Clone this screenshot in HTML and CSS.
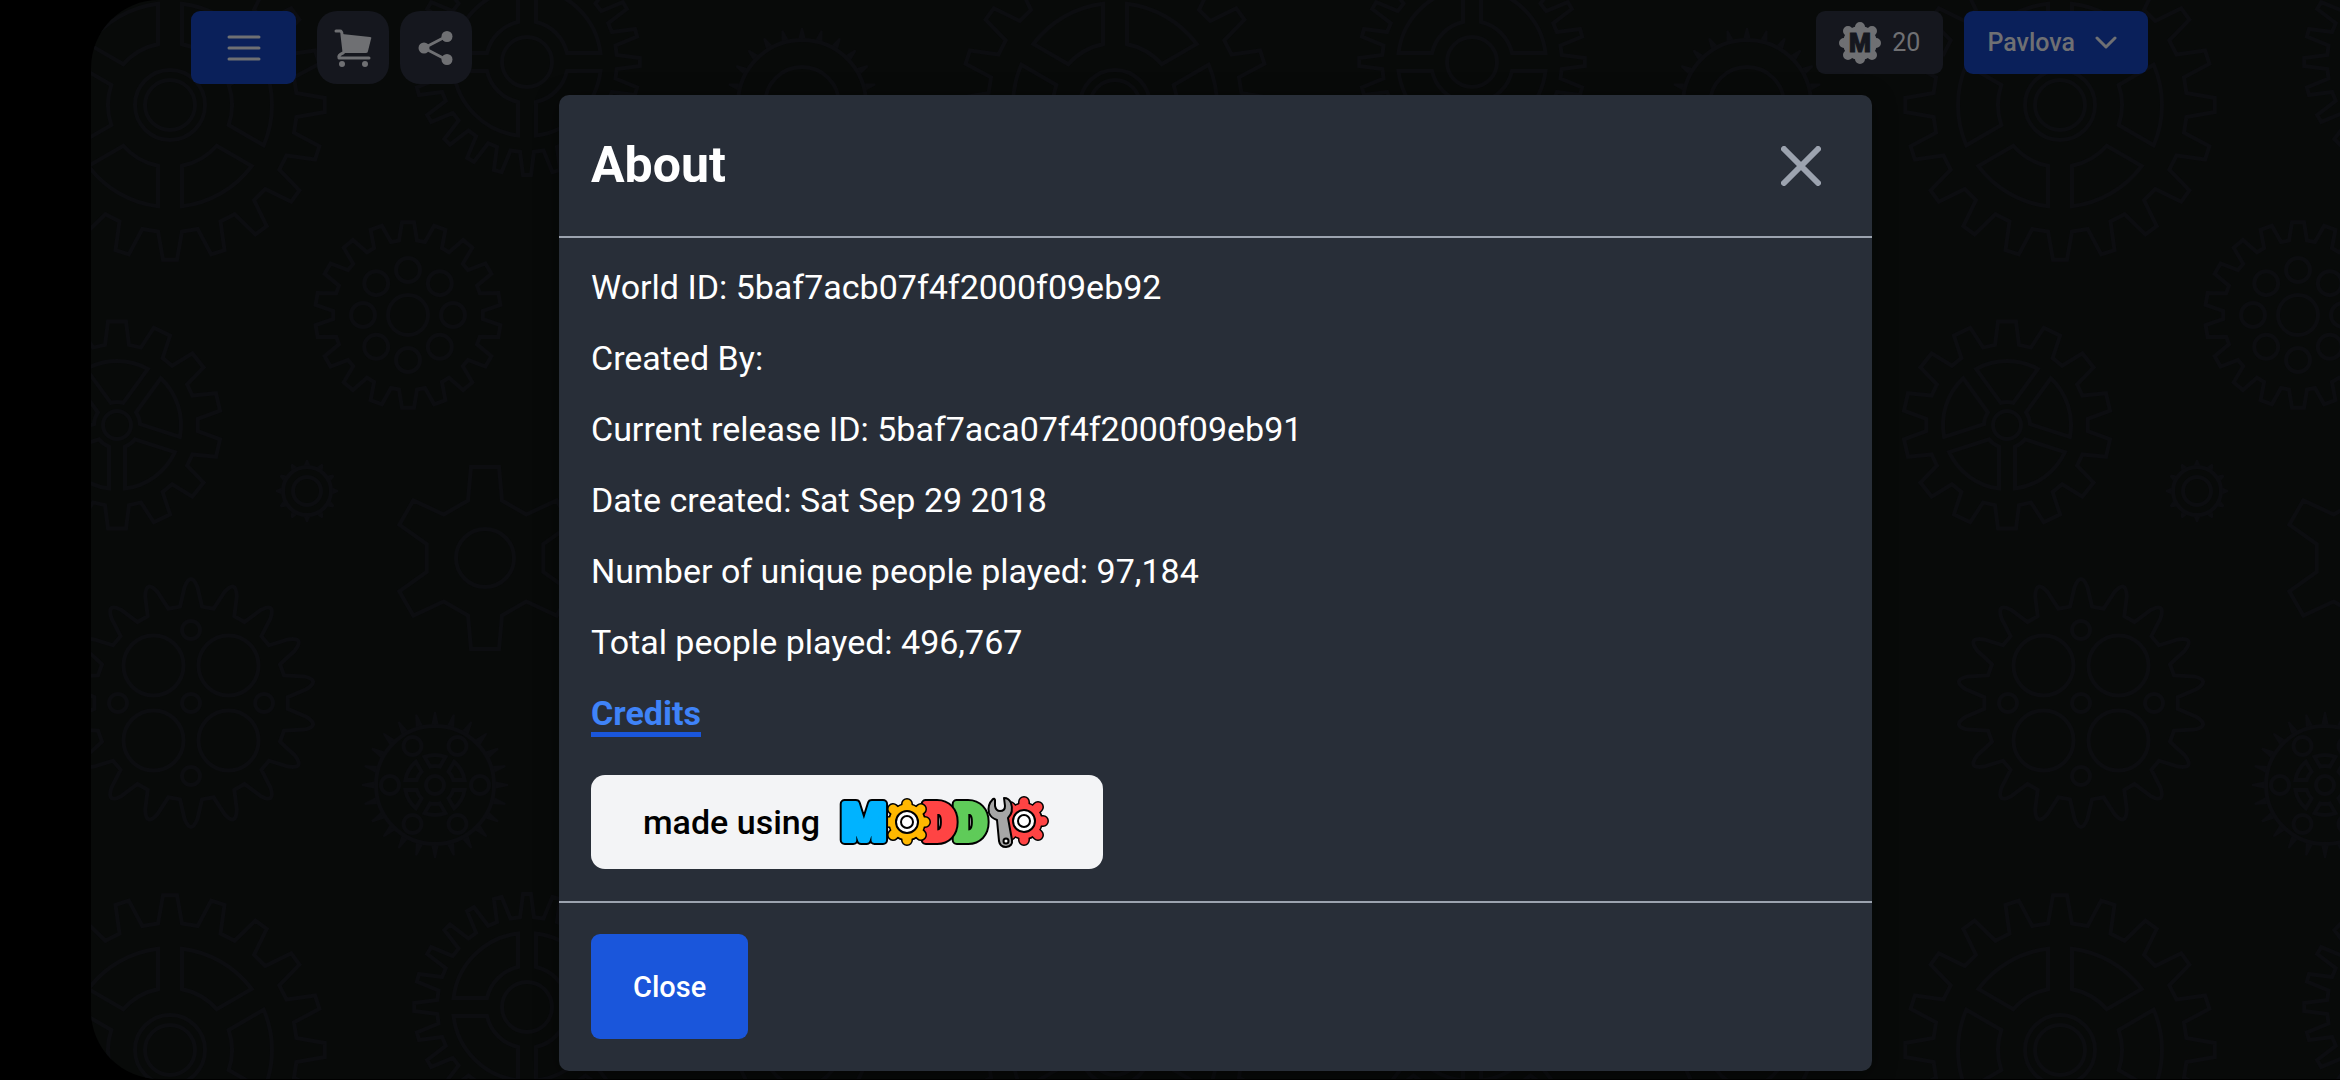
FILE: index.html
```html
<!DOCTYPE html>
<html lang="en">
<head>
  <meta charset="UTF-8" />
  <meta name="viewport" content="width=device-width, initial-scale=1.0" />
  <title>About</title>
  <link rel="stylesheet" href="styles.css">
</head>
<body>
  <div class="stage">
    <svg class="backdrop" id="backdrop" aria-hidden="true"></svg>

    <header class="topbar">
      <div class="topbar-group">
        <button class="btn-menu" aria-label="Menu">
          <svg width="34" height="28" viewBox="0 0 34 28" fill="none" stroke="currentColor" stroke-width="3" stroke-linecap="round"><path d="M2 3H32M2 14H32M2 25H32"/></svg>
        </button>
        <div class="tools">
          <button class="btn-tool" aria-label="Shop">
            <svg width="40" height="40" viewBox="0 0 40 40" fill="currentColor">
              <path d="M3 3H7Q9 3 9 7L11 24" fill="none" stroke="currentColor" stroke-width="3" stroke-linecap="round"/>
              <path d="M9 6L37 9Q39 9 38 11L35 23Q35 25 33 25H11Z"/>
              <path d="M10 25Q5 27 6 30H36" fill="none" stroke="currentColor" stroke-width="3" stroke-linecap="round" stroke-linejoin="round"/>
              <circle cx="9" cy="36" r="3"/><circle cx="32" cy="36" r="3"/>
            </svg>
          </button>
          <button class="btn-tool" aria-label="Share">
            <svg width="36" height="36" viewBox="0 0 36 36" fill="currentColor">
              <path d="M6 18L29 6M6 18L29 30" stroke="currentColor" stroke-width="3"/>
              <circle cx="6" cy="18" r="5.500"/><circle cx="29" cy="6.500" r="5.500"/><circle cx="29" cy="29.500" r="5.500"/>
            </svg>
          </button>
        </div>
      </div>

      <div class="topbar-group">
        <button class="btn-coins">
          <svg width="42" height="42" viewBox="-21 -21 42 42">
            <path d="M0-16V16M-16 0H16M-12-12L12 12M12-12L-12 12" stroke="currentColor" stroke-width="10" stroke-linecap="round"/>
            <circle r="17" fill="currentColor"/>
            <text class="coin-letter" x="0" y="9" text-anchor="middle">M</text>
          </svg>
          <span>20</span>
        </button>
        <button class="btn-user">
          <span>Pavlova</span>
          <svg width="22" height="14" viewBox="0 0 22 14" fill="none" stroke="currentColor" stroke-width="3" stroke-linecap="round" stroke-linejoin="round"><path d="M2 2L11 11L20 2"/></svg>
        </button>
      </div>
    </header>

    <section class="modal" role="dialog" aria-labelledby="modalTitle">
      <div class="modal-header">
        <h2 id="modalTitle">About</h2>
        <button class="btn-close" aria-label="Close dialog">
          <svg width="40" height="40" viewBox="0 0 40 40" fill="none" stroke="currentColor" stroke-width="6" stroke-linecap="round"><path d="M3 3L37 37M37 3L3 37"/></svg>
        </button>
      </div>

      <div class="modal-body">
        <p>World ID: 5baf7acb07f4f2000f09eb92</p>
        <p>Created By:</p>
        <p>Current release ID: 5baf7aca07f4f2000f09eb91</p>
        <p>Date created: Sat Sep 29 2018</p>
        <p>Number of unique people played: 97,184</p>
        <p>Total people played: 496,767</p>
        <a class="credits" href="#credits">Credits</a>

        <a class="made-using" href="#moddio">
          <span>made using</span>
          <svg class="logo" width="216" height="64" viewBox="16 9 216 64" aria-label="MODDIO">
            <text class="letter outline" x="133" y="59">D</text>
            <text class="letter green" x="133" y="59">D</text>
            <text class="letter outline" x="102" y="59">D</text>
            <text class="letter red" x="102" y="59">D</text>
            <g transform="translate(86 41)">
              <g class="gear-outline"><path d="M0-18V18M-18 0H18M-14-13L14 13M14-13L-14 13"/><circle r="16"/></g>
              <g class="gear-yellow"><path d="M0-18V18M-18 0H18M-14-13L14 13M14-13L-14 13"/><circle r="16"/></g>
              <circle class="hub" r="11"/><circle class="hub" r="6"/>
            </g>
            <text class="letter outline" x="21" y="59">M</text>
            <text class="letter blue" x="21" y="59">M</text>
            <g transform="translate(203 40)">
              <g class="gear-outline"><path d="M0-19V19M-19 0H19M-14-14L14 14M14-14L-14 14"/><circle r="16"/></g>
              <g class="gear-red"><path d="M0-19V19M-19 0H19M-14-14L14 14M14-14L-14 14"/><circle r="16"/></g>
              <circle class="hub" r="11"/><circle class="hub" r="6"/>
            </g>
            <path class="wrench" d="M172 18Q166 24 168 32Q170 37 176 39L178 60Q179 66 185 66Q192 65 191 59L187 37Q193 31 190 22Q188 17 183 17L184 25Q184 30 179 30Q175 30 174 25L174 19Q173 17 172 18Z"/>
            <circle class="wrench-hole" cx="185" cy="60" r="2.500"/>
          </svg>
        </a>
      </div>

      <div class="modal-footer">
        <button class="btn-primary">Close</button>
      </div>
    </section>
  </div>

  <script src="script.js"></script>
</body>
</html>
```
FILE: styles.css
```css
:root {
  --bg: #080a09;
  --gear: #0c0d10;
  --panel: #282e38;
  --line: #9ca3af;
  --blue: #1a56db;
  --blue-dim: #0a205a;
  --gray-dim: #15171e;
  --icon-dim: #6f7073;
}

* {
  margin: 0;
  padding: 0;
  box-sizing: border-box;
  font-family: Roboto, 'Liberation Sans', sans-serif;
}

body {
  background: #000;
  color: #fff;
  min-height: 100vh;
  padding: 0 0 1px 91px;
}

button {
  border: none;
  cursor: pointer;
  display: flex;
  align-items: center;
  justify-content: center;
}

.stage {
  position: relative;
  min-height: calc(100vh - 1px);
  background: var(--bg);
  border-radius: 68px 0 0 68px;
  overflow: hidden;
}

/* gear wallpaper lies under everything */
.backdrop {
  position: absolute;
  inset: 0;
  width: 100%;
  height: 100%;
  fill: none;
  stroke: var(--gear);
  stroke-width: 4;
}

.backdrop .solid {
  fill: var(--gear);
  stroke: none;
}

.topbar {
  position: relative;
  display: flex;
  justify-content: space-between;
  align-items: flex-start;
  padding: 11px 192px 11px 100px;
}

.topbar-group {
  display: flex;
  gap: 21px;
}

.tools {
  display: flex;
  gap: 11px;
}

.btn-menu,
.btn-tool {
  height: 73px;
  color: var(--icon-dim);
}

.btn-menu {
  width: 105px;
  border-radius: 9px;
  background: var(--blue-dim);
}

.btn-tool {
  width: 72px;
  border-radius: 20px;
  background: var(--gray-dim);
}

.btn-coins,
.btn-user {
  height: 63px;
  border-radius: 9px;
  color: var(--icon-dim);
  font-size: 25px;
}

.btn-coins {
  gap: 11px;
  padding: 0 23px;
  background: var(--gray-dim);
}

.btn-user {
  gap: 20px;
  padding: 0 31px 0 23px;
  background: var(--blue-dim);
  font-weight: 500;
}

.coin-letter {
  font-size: 25px;
  font-weight: 900;
  fill: var(--gray-dim);
  stroke: var(--gray-dim);
  stroke-width: 1;
}

/* Modal */
.modal {
  position: relative;
  width: 100%;
  max-width: 1313px;
  margin: 0 auto 8px;
  background: var(--panel);
  border-radius: 10px;
  box-shadow: 0 4px 24px rgba(0,0,0,0.4);
}

.modal-header {
  display: flex;
  justify-content: space-between;
  align-items: center;
  padding: 33px 51px 33px 32px;
  border-bottom: 2px solid var(--line);
}

.modal-header h2 {
  font-size: 50px;
  line-height: 75px;
  font-weight: 700;
}

.btn-close {
  background: transparent;
  color: var(--line);
}

.modal-body {
  display: flex;
  flex-direction: column;
  align-items: flex-start;
  gap: 33px;
  padding: 30px 32px 32px;
  font-size: 34px;
  line-height: 38px;
}

.credits {
  color: #3f83f8;
  font-weight: 700;
  text-decoration: none;
  border-bottom: 5px solid var(--blue);
}

.made-using {
  display: flex;
  align-items: center;
  gap: 17px;
  height: 94px;
  margin-top: 5px;
  padding: 0 50px 0 52px;
  border-radius: 14px;
  background: #f3f4f6;
  color: #000;
  font-weight: 500;
  text-decoration: none;
}

.modal-footer {
  padding: 31px 32px 32px;
  border-top: 2px solid var(--line);
}

.btn-primary {
  height: 105px;
  padding: 0 42px;
  border-radius: 9px;
  background: var(--blue);
  color: #fff;
  font-size: 29px;
  font-weight: 500;
}

/* Logo */
.letter {
  font-size: 50px;
  font-weight: 900;
  stroke-width: 6;
  stroke-linejoin: round;
}

.outline { fill: #000; stroke: #000; stroke-width: 10; }
.blue { fill: #00b3ff; stroke: #00b3ff; }
.red { fill: #ff4444; stroke: #ff4444; }
.green { fill: #5fcb59; stroke: #5fcb59; }

.gear-outline,
.gear-yellow,
.gear-red {
  stroke-linecap: round;
}

.gear-outline { fill: #000; stroke: #000; stroke-width: 12; }
.gear-yellow { fill: #ffb800; stroke: #ffb800; stroke-width: 9; }
.gear-red { fill: #ff4444; stroke: #ff4444; stroke-width: 9; }
.gear-outline circle { stroke-width: 6; }
.gear-yellow circle, .gear-red circle { stroke-width: 3; }

.hub { fill: #fff; stroke: #000; stroke-width: 2; }
.wrench { fill: #a6a6a6; stroke: #000; stroke-width: 2; stroke-linejoin: round; }
.wrench-hole { fill: #fff; stroke: #000; stroke-width: 2; }
```
FILE: script.js
```js
// Gear wallpaper: one tile of gears, repeated across the stage
const TILE = 945;
const svg = document.getElementById('backdrop');

function pt(cx, cy, r, deg) {
  const a = deg * Math.PI / 180;
  return (cx + r * Math.cos(a)).toFixed(1) + ' ' + (cy + r * Math.sin(a)).toFixed(1);
}

// toothed outline; wide and narrow are the half widths of a tooth in px
function teeth(x, y, outer, root, count, wide, narrow, offset = 0, round = false) {
  const base = Math.asin(wide / root) * 180 / Math.PI;
  const tip = Math.asin(narrow / outer) * 180 / Math.PI;
  let d = '';
  for (let i = 0; i < count; i++) {
    const a = 90 + offset + i * 360 / count;
    d += (i ? 'L' : 'M') + pt(x, y, root, a - base) + 'L' + pt(x, y, outer - (round ? 8 : 0), a - tip);
    d += round ? 'Q' + pt(x, y, outer + 8, a) + ' ' + pt(x, y, outer - 8, a + tip) : 'L' + pt(x, y, outer, a + tip);
    d += 'L' + pt(x, y, root, a + base);
  }
  return `<path d="${d}Z"/>`;
}

function ring(x, y, r) {
  return `<circle cx="${x}" cy="${y}" r="${r}"/>`;
}

function holes(x, y, dist, r, count, offset = 0) {
  let out = '';
  for (let i = 0; i < count; i++) {
    const [hx, hy] = pt(x, y, dist, offset + i * 360 / count).split(' ');
    out += ring(hx, hy, r);
  }
  return out;
}

// cut-outs between spokes
function windows(x, y, outer, inner, count, spoke, offset = 0) {
  let out = '';
  for (let i = 0; i < count; i++) {
    const mid = offset + i * 360 / count;
    const half = 180 / count;
    const o = half - Math.asin(spoke / outer) * 180 / Math.PI;
    const n = Math.max(half - Math.asin(Math.min(spoke / inner, 1)) * 180 / Math.PI, 1);
    out += `<path d="M${pt(x, y, inner, mid - n)}L${pt(x, y, outer, mid - o)}A${outer} ${outer} 0 0 1 ${pt(x, y, outer, mid + o)}L${pt(x, y, inner, mid + n)}A${inner} ${inner} 0 0 0 ${pt(x, y, inner, mid - n)}Z"/>`;
  }
  return out;
}

function fine(x, y, outer, root, count) {
  return `<g class="solid">${teeth(x, y, outer, root, count, 4, 1).replace('Z"', `Z M${x - root} ${y}a${root} ${root} 0 1 0 ${root * 2} 0a${root} ${root} 0 1 0 -${root * 2} 0Z" fill-rule="evenodd"`)}</g>` + ring(x, y, root);
}

const tile = [
  teeth(79, 105, 155, 127, 20, 12, 7), windows(79, 105, 102, 62, 6, 12), ring(79, 105, 35), ring(79, 105, 25),
  teeth(436, 62, 113, 90, 24, 7, 4), windows(436, 62, 74, 41, 4, 9, 45), ring(436, 62, 25),
  teeth(317, 315, 93, 75, 18, 9, 6), holes(317, 315, 45, 12, 8), ring(317, 315, 20),
  teeth(26, 425, 104, 81, 14, 12, 9), windows(26, 425, 64, 23, 5, 8, -90), ring(26, 425, 14),
  fine(216, 491, 31, 24, 12), ring(216, 491, 14),
  teeth(394, 558, 92, 60, 6, 17, 14), ring(394, 558, 29),
  teeth(100, 703, 124, 97, 18, 11, 7, 0, true), holes(100, 703, 53, 30, 4, 45), holes(100, 703, 73, 9, 4), ring(100, 703, 9),
  fine(344, 785, 73, 59, 24), holes(344, 785, 45, 9, 6), windows(344, 785, 30, 19, 6, 5, 30), ring(344, 785, 9),
  fine(711, 104, 76, 64, 24), ring(711, 104, 37),
  fine(719, 267, 84, 70, 24),
  teeth(720, 737, 88, 68, 12, 10, 7, 0)
].join('');

let markup = `<defs><g id="tile">${tile}</g></defs>`;
for (let row = -1; row < 2; row++) {
  for (let col = -1; col < 3; col++) {
    markup += `<use href="#tile" x="${col * TILE}" y="${row * TILE}"/>`;
  }
}
svg.innerHTML = markup;
```
